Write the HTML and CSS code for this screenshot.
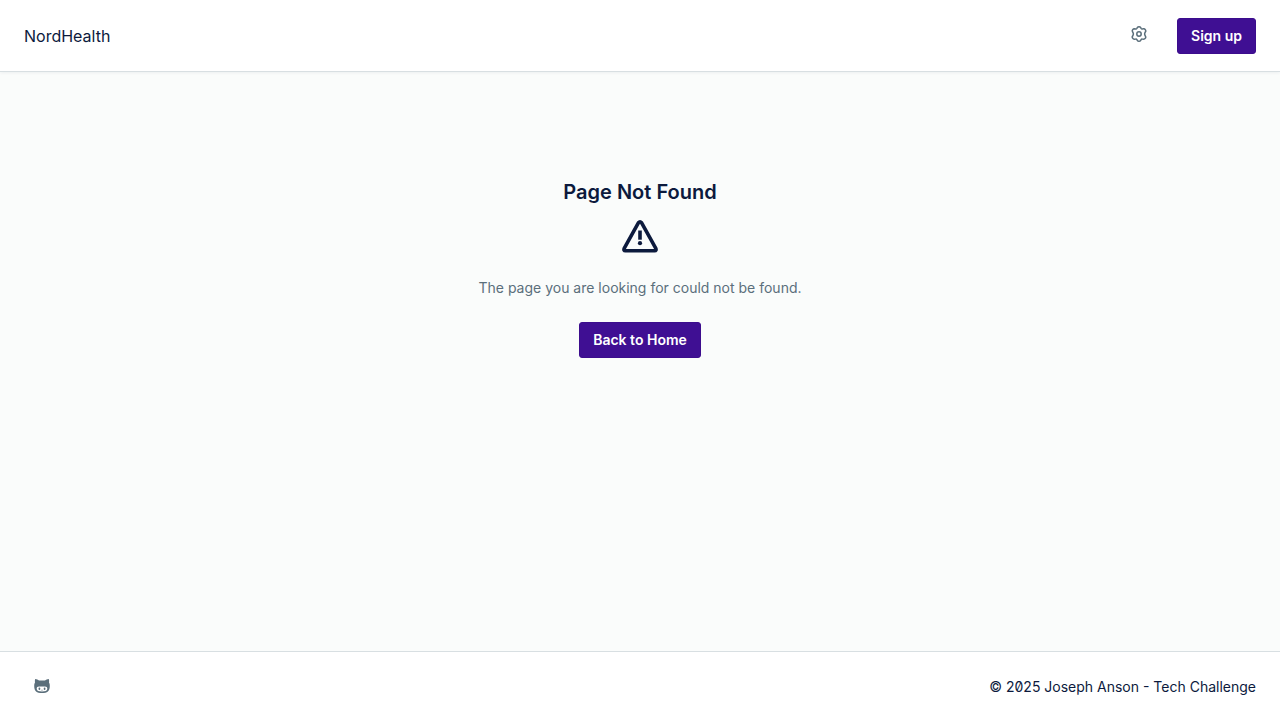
FILE: index.html
```
<!DOCTYPE html>
<html lang="en">
<head>
<meta charset="utf-8">
<meta name="viewport" content="width=device-width, initial-scale=1">
<title>Page Not Found - NordHealth</title>
<link rel="stylesheet" href="styles.css">
</head>
<body>
<header class="header">
  <a class="brand" href="#">NordHealth</a>
  <div class="actions">
    <button class="icon-button" type="button" aria-label="Settings">
      <svg class="icon" viewBox="0 0 16 16" fill="none" stroke="currentColor" stroke-width="1.5" stroke-linejoin="round" aria-hidden="true">
        <path d="M6.3 1.7Q6.8.8 8 .8T9.7 1.7L10.1 2.4Q10.5 3 11.2 2.9L12.5 2.8Q13.7 2.7 14.4 3.8T14.5 5.7L13.9 6.8Q13.4 8 13.9 9.2L14.5 10.3Q15 11.2 14.4 12.2T12.5 13.2L11.2 13.1Q10.5 13 10.1 13.6L9.7 14.3Q9.2 15.2 8 15.2T6.3 14.3L5.9 13.6Q5.5 13 4.8 13.1L3.5 13.2Q2.3 13.3 1.6 12.2T1.5 10.3L2.1 9.2Q2.6 8 2.1 6.8L1.5 5.7Q1 4.8 1.6 3.8T3.5 2.8L4.8 2.9Q5.5 3 5.9 2.4Z"/>
        <circle cx="8" cy="8" r="2.2"/>
      </svg>
    </button>
    <button class="button" type="button">Sign up</button>
  </div>
</header>
<main class="main">
  <h1 class="title">Page Not Found</h1>
  <svg class="warning" viewBox="0 0 36 36" fill="none" stroke="currentColor" stroke-width="3.6" aria-hidden="true">
    <path stroke-linejoin="round" d="M16.5 4.7Q18 2.8 19.5 4.7L33.8 30.3Q34.7 32.7 32.6 32.7H3.4Q1.3 32.7 2.2 30.3Z"/>
    <path d="M18 12.5V21.7"/>
    <circle cx="18" cy="25.2" r="2.1" fill="currentColor" stroke="none"/>
  </svg>
  <p class="message">The page you are looking for could not be found.</p>
  <a class="button" href="#">Back to Home</a>
</main>
<footer class="footer">
  <a class="icon-link" href="#" aria-label="GitHub">
    <svg class="icon" viewBox="0 0 16 16" aria-hidden="true">
      <path fill="currentColor" fill-rule="evenodd" d="M1.2 1.1C2.5 1 4 1.8 5 2.6Q8 2.2 11 2.6C12 1.8 13.5 1 14.8 1.1Q15.4 2.8 15 4.6Q15.9 5.8 15.8 8C15.8 13.2 13.4 15 8 15S.2 13.2.2 8Q.1 5.8 1 4.6Q.6 2.8 1.2 1.1ZM5 8.4C3.5 8.4 2.7 9.3 2.7 10.7C2.7 12.9 4.6 13.4 8 13.4S13.3 12.9 13.3 10.7C13.3 9.3 12.5 8.4 11 8.4Z"/>
      <ellipse cx="5.4" cy="10.7" rx=".9" ry="1.2" fill="currentColor"/>
      <ellipse cx="10.6" cy="10.7" rx=".9" ry="1.2" fill="currentColor"/>
      <path d="M7.2 12.2H8.8" fill="none" stroke="currentColor" stroke-width=".5"/>
    </svg>
  </a>
  <p class="copyright">© 2025 Joseph Anson - Tech Challenge</p>
</footer>
</body>
</html>
```
FILE: styles.css
```
* {
  box-sizing: border-box;
}

body {
  margin: 0;
  min-height: 100vh;
  display: flex;
  flex-direction: column;
  background: #fafcfb;
  color: #0c1a3d;
  font: 14px/20px Inter, "Liberation Sans", sans-serif;
  font-feature-settings: "zero";
}

.header,
.footer {
  display: flex;
  align-items: center;
  justify-content: space-between;
  background: #fff;
}

.header {
  padding: 18px 24px 17px;
  border-bottom: 1px solid #d8dfe2;
  box-shadow: 0 1px 3px rgba(12, 26, 61, 0.06);
}

.footer {
  padding: 16px 24px;
  border-top: 1px solid #d8dfe2;
}

.brand {
  color: inherit;
  font-size: 16px;
  line-height: 24px;
  text-decoration: none;
}

.actions {
  display: flex;
  align-items: flex-start;
  gap: 20px;
}

.icon-button,
.icon-link {
  display: flex;
  padding: 8px 10px;
  border: 0;
  background: none;
  color: #5b6f7b;
}

.icon-link {
  padding: 10px;
}

.icon {
  width: 16px;
  height: 16px;
}

.button {
  display: inline-block;
  padding: 7px 13px;
  border: 1px solid #3c0d8d;
  border-radius: 3px;
  background: #3f0f93;
  color: #fff;
  font: inherit;
  font-weight: 600;
  text-decoration: none;
}

.main {
  flex: 1;
  display: flex;
  flex-direction: column;
  align-items: center;
  padding: 108px 24px 24px;
}

.title {
  margin: 0;
  font-size: 20px;
  line-height: 24px;
  font-weight: 600;
}

.warning {
  width: 36px;
  height: 36px;
  margin-top: 14px;
}

.message {
  margin: 24px 0;
  color: #5b6f7b;
}

.copyright {
  margin: 0;
  padding-top: 2px;
}
```
